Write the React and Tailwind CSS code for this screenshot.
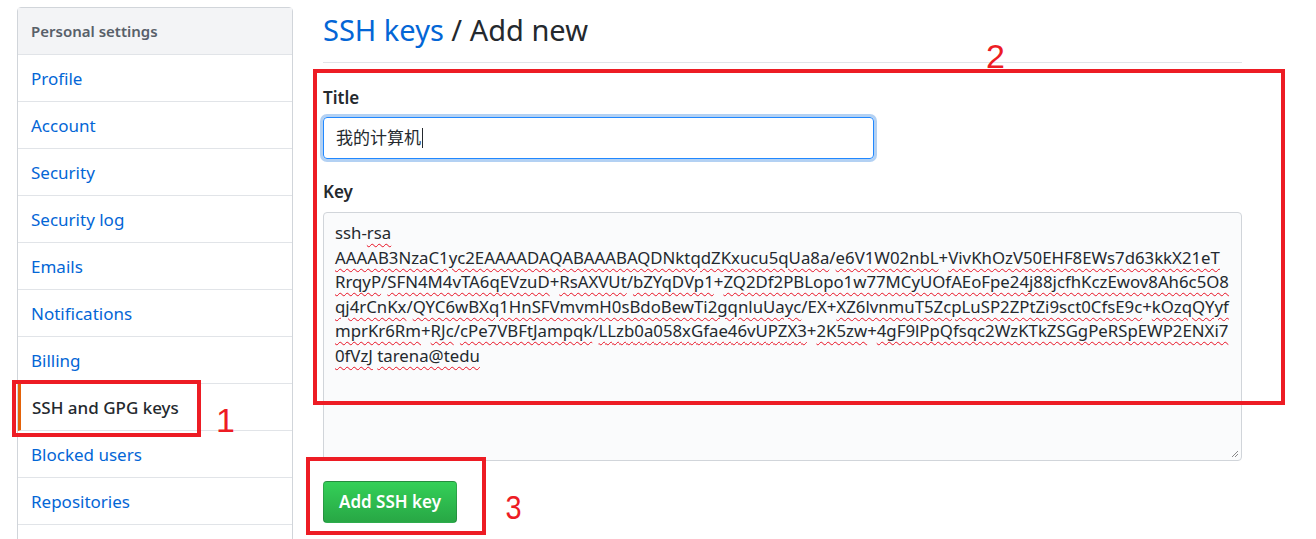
import React from "react";

const font = { fontFamily: '"Noto Sans", "Noto Sans CJK SC", sans-serif' };

const navItems = [
  "Profile",
  "Account",
  "Security",
  "Security log",
  "Emails",
  "Notifications",
  "Billing",
  "SSH and GPG keys",
  "Blocked users",
  "Repositories",
];

const keyLines = [
  "ssh-rsa",
  "AAAAB3NzaC1yc2EAAAADAQABAAABAQDNktqdZKxucu5qUa8a/e6V1W02nbL+VivKhOzV50EHF8EWs7d63kkX21eT",
  "RrqyP/SFN4M4vTA6qEVzuD+RsAXVUt/bZYqDVp1+ZQ2Df2PBLopo1w77MCyUOfAEoFpe24j88jcfhKczEwov8Ah6c5O8",
  "qj4rCnKx/QYC6wBXq1HnSFVmvmH0sBdoBewTi2gqnluUayc/EX+XZ6lvnmuT5ZcpLuSP2ZPtZi9sct0CfsE9c+kOzqQYyf",
  "mprKr6Rm+RJc/cPe7VBFtJampqk/LLzb0a058xGfae46vUPZX3+2K5zw+4gF9lPpQfsqc2WzKTkZSGgPeRSpEWP2ENXi7",
  "0fVzJ tarena@tedu",
];

const plainWords = new Set(["EX", "ssh-"]);

const KeyLine = ({ text }) => {
  const parts = text.split(/(ssh-|[\/+ ])/).filter(Boolean);
  return (
    <div className="whitespace-pre">
      {parts.map((p, i) =>
        /^[\/+ ]$/.test(p) || plainWords.has(p) ? (
          <span key={i}>{p}</span>
        ) : (
          <span
            key={i}
            className="underline decoration-wavy decoration-[#e81123] decoration-1 underline-offset-[4px]"
          >
            {p}
          </span>
        )
      )}
    </div>
  );
};

const Sidebar = () => (
  <nav className="ml-[17px] mt-[7px] w-[276px] shrink-0 self-start rounded-[4px] border border-[#d1d5da]">
    <div className="flex h-[47px] items-center border-b border-[#e1e4e8] bg-[#f3f4f6] px-[13px] text-[15px] font-semibold text-[#586069]">
      Personal settings
    </div>
    {navItems.map((item) => {
      const active = item === "SSH and GPG keys";
      return (
        <div
          key={item}
          className={
            active
              ? "flex h-[47px] items-center border-b border-l-[3px] border-[#e1e4e8] border-l-[#e36209] px-[11px] pt-[2px] text-[17px] font-medium text-[#24292e]"
              : "flex h-[47px] items-center border-b border-[#e1e4e8] px-[13px] pt-[2px] text-[17px] text-[#0366d6]"
          }
        >
          {item}
        </div>
      );
    })}
    <div className="h-[47px]" />
  </nav>
);

const Annotation = ({ className }) => (
  <div className={`pointer-events-none absolute border-[4px] border-[#ed1c24] ${className}`} />
);

const Digit = ({ children, className }) => (
  <div
    className={`pointer-events-none absolute text-[34px] leading-none text-[#ed1c24] ${className}`}
    style={{ fontFamily: '"Liberation Sans", Arial, sans-serif' }}
  >
    {children}
  </div>
);

export default function App() {
  return (
    <div className="relative flex h-[539px] w-[1316px] overflow-hidden bg-white text-[#24292e]" style={font}>
      <Sidebar />

      <main className="ml-[30px] w-[919px] shrink-0">
        <div className="border-b border-[#e1e4e8] pb-[12px] pt-[10px]">
          <h1 className="h-[40px] text-[29px] font-normal leading-[40px]">
            <span className="text-[#0366d6]">SSH keys</span> / Add new
          </h1>
        </div>

        <div className="mt-[23px]">
          <label className="block text-[17px] font-semibold leading-[24px]">Title</label>
          <div className="mt-[7px] flex h-[42px] w-[551px] items-center rounded-[4px] border border-[#2188ff] px-[12px] text-[17px] shadow-[0_0_0_3px_rgba(3,102,214,0.3)]">
            我的计算机
            <span className="ml-[1px] inline-block h-[20px] w-px bg-[#24292e]" />
          </div>
        </div>

        <div className="mt-[21px]">
          <label className="block text-[17px] font-semibold leading-[24px]">Key</label>
          <div className="relative mt-[8px] h-[249px] overflow-hidden rounded-[4px] border border-[#d1d5da] bg-[#fafbfc] px-[11px] pt-[8px] text-[16.8px] leading-[24.5px] text-[#24292e]">
            {keyLines.map((line) => (
              <KeyLine key={line} text={line} />
            ))}
            <svg className="absolute bottom-[2px] right-[2px]" width="9" height="9" viewBox="0 0 9 9">
              <path d="M8 2 L2 8 M8 5 L5 8" stroke="#8a8a8a" strokeWidth="1" />
            </svg>
          </div>
        </div>

        <button className="mt-[20px] h-[42px] w-[134px] rounded-[4px] border border-[rgba(27,31,35,0.2)] bg-gradient-to-b from-[#34d058] to-[#28a745] text-[17px] font-semibold text-white">
          Add SSH key
        </button>
      </main>

      <Annotation className="left-[313px] top-[69px] h-[336px] w-[972px]" />
      <Annotation className="left-[12px] top-[380px] h-[57px] w-[189px]" />
      <Annotation className="left-[306px] top-[457px] h-[78px] w-[180px]" />
      <Digit className="left-[986px] top-[39px]">2</Digit>
      <Digit className="left-[216px] top-[403px]">1</Digit>
      <Digit className="left-[504px] top-[490px] scale-x-[0.85]">3</Digit>
    </div>
  );
}
